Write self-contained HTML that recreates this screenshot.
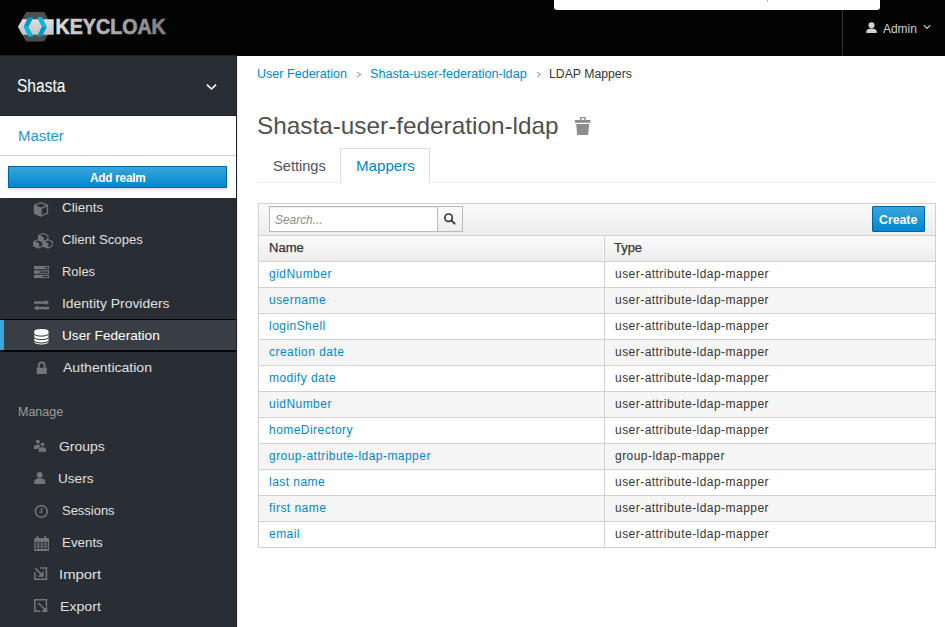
<!DOCTYPE html>
<html><head><meta charset="utf-8"><style>
*{box-sizing:border-box;margin:0;padding:0}
html,body{width:945px;height:627px;overflow:hidden;background:#fff;font-family:"Liberation Sans",sans-serif;color:#363636}
div,svg{position:absolute}
.t{white-space:nowrap;line-height:1;transform-origin:0 0}
</style></head><body>
<div style="left:0;top:0;width:945px;height:56px;background:#030303"></div>
<div style="left:0;top:55px;width:237px;height:1px;background:#1e1f21"></div>
<div style="left:554px;top:0;width:326px;height:10px;background:#fff;border-radius:0 0 3px 3px"></div>
<div style="left:767px;top:0;width:1px;height:2px;background:#bbb"></div>
<div style="left:842px;top:10px;width:1px;height:45px;background:#333"></div>
<svg style="left:0;top:0" width="200" height="55" viewBox="0 0 200 55">
<defs>
<linearGradient id="kg" x1="0" x2="1" y1="0" y2="0"><stop offset="0" stop-color="#d4d4d4"/><stop offset="1" stop-color="#8a8a8a"/></linearGradient>
<linearGradient id="bg1" x1="0" x2="0" y1="0" y2="1"><stop offset="0" stop-color="#e0e0e0"/><stop offset="1" stop-color="#c4c4c4"/></linearGradient>
</defs>
<polygon points="26,12 44.3,12 52,26.8 44.3,41.6 26,41.6 18,26.8" fill="#4d4d4d"/>
<polygon points="22.4,19.2 53.7,19.2 53.7,34.7 22.4,34.7 18,26.8" fill="url(#bg1)"/>
<polygon points="28.3,17 33.4,17 28.6,26.8 23.6,26.8" fill="#0096c8"/>
<polygon points="23.6,26.8 28.6,26.8 33.4,36.6 28.3,36.6" fill="#00b8e4"/>
<polygon points="37,17 42,17 46.9,26.8 41.8,26.8" fill="#00b8e4"/>
<polygon points="41.8,26.8 46.9,26.8 42,36.6 37,36.6" fill="#0096c8"/>
</svg>
<svg style="left:0;top:0" width="200" height="55" viewBox="0 0 200 55"><defs><linearGradient id="tg" gradientUnits="userSpaceOnUse" x1="55" x2="166" y1="0" y2="0"><stop offset="0" stop-color="#dcdcdc"/><stop offset="1" stop-color="#7e7e7e"/></linearGradient></defs><text x="55.6" y="34.3" textLength="110.2" lengthAdjust="spacingAndGlyphs" font-family="Liberation Sans" font-weight="bold" font-size="22.5" fill="url(#tg)" stroke="url(#tg)" stroke-width="0.7">KEYCLOAK</text></svg>
<svg style="left:866px;top:22px" width="11" height="11" viewBox="0 0 11 11"><circle cx="5.5" cy="3.2" r="3" fill="#d1d1d1"/><path d="M0.3 11 V9.6 C0.3 7.3 2.4 6.4 5.5 6.4 C8.6 6.4 10.7 7.3 10.7 9.6 V11Z" fill="#d1d1d1"/></svg>
<div class="t" id="admin" style="left:883.01px;top:22.59px;font-size:12px;color:#d1d1d1;font-weight:normal;font-style:normal;letter-spacing:0px;transform:scaleX(0.9949);">Admin</div>
<svg style="left:923px;top:24px" width="8" height="6" viewBox="0 0 8 6"><path d="M0.8 1.2 L4 4.4 L7.2 1.2" stroke="#d1d1d1" stroke-width="1.2" fill="none"/></svg>
<div style="left:0;top:56px;width:237px;height:571px;background:#292e34"></div>
<div style="left:236px;top:56px;width:1px;height:571px;background:#22262b"></div>
<div style="left:237px;top:56px;width:1px;height:571px;background:#ededed"></div>
<div class="t" id="shasta" style="left:17.08px;top:77.00px;font-size:18px;color:#fff;font-weight:normal;font-style:normal;letter-spacing:0px;transform:scaleX(0.8635);">Shasta</div>
<svg style="left:205px;top:82px" width="14" height="10" viewBox="0 0 14 10"><path d="M1.9 2.6 L6.5 7 L11.1 2.6" stroke="#fff" stroke-width="1.6" fill="none"/></svg>
<div style="left:0;top:115px;width:236px;height:1px;background:#202328"></div>
<div style="left:0;top:116px;width:236px;height:82px;background:#fff"></div>
<div class="t" id="master" style="left:17.76px;top:129.00px;font-size:14px;color:#2795d6;font-weight:normal;font-style:normal;letter-spacing:0px;transform:scaleX(1.0718);">Master</div>
<div style="left:0;top:155px;width:236px;height:1px;background:#d1d1d1"></div>
<div style="left:8px;top:166px;width:219px;height:22px;background:linear-gradient(#39a5dc,#0088ce);border:1px solid #00659c;border-radius:0;box-shadow:0 2px 3px rgba(3,3,3,.12)"></div>
<div class="t" id="addrealm" style="left:89.60px;top:172.05px;font-size:12px;color:#fff;font-weight:bold;font-style:normal;letter-spacing:-0.25px;transform:scaleX(0.9847);">Add realm</div>
<div style="left:0;top:319px;width:236px;height:33px;background:#393f44;border-top:1px solid #030303;border-bottom:2px solid #050505"></div>
<div style="left:0;top:320px;width:4px;height:30px;background:#39a5dc"></div>
<div class="t" id="n_clients" style="left:62.49px;top:200.80px;font-size:13.5px;color:#e0e0e0;font-weight:normal;font-style:normal;letter-spacing:0px;transform:scaleX(0.9983);">Clients</div>
<div class="t" id="n_scopes" style="left:62.24px;top:233.25px;font-size:13.5px;color:#e0e0e0;font-weight:normal;font-style:normal;letter-spacing:0px;transform:scaleX(0.9694);">Client Scopes</div>
<div class="t" id="n_roles" style="left:62.33px;top:264.55px;font-size:13.5px;color:#e0e0e0;font-weight:normal;font-style:normal;letter-spacing:0px;transform:scaleX(0.9567);">Roles</div>
<div class="t" id="n_idp" style="left:61.76px;top:296.80px;font-size:13.5px;color:#e0e0e0;font-weight:normal;font-style:normal;letter-spacing:0px;transform:scaleX(1.0307);">Identity Providers</div>
<div class="t" id="n_uf" style="left:62.08px;top:328.55px;font-size:13.5px;color:#fff;font-weight:normal;font-style:normal;letter-spacing:0px;transform:scaleX(1.0098);">User Federation</div>
<div class="t" id="n_auth" style="left:62.76px;top:360.80px;font-size:13.5px;color:#e0e0e0;font-weight:normal;font-style:normal;letter-spacing:0px;transform:scaleX(1.0401);">Authentication</div>
<div class="t" id="n_groups" style="left:59.29px;top:439.75px;font-size:13.5px;color:#e0e0e0;font-weight:normal;font-style:normal;letter-spacing:0px;transform:scaleX(1.0338);">Groups</div>
<div class="t" id="n_users" style="left:57.58px;top:471.79px;font-size:13.5px;color:#e0e0e0;font-weight:normal;font-style:normal;letter-spacing:0px;transform:scaleX(1.0076);">Users</div>
<div class="t" id="n_sessions" style="left:61.83px;top:504.00px;font-size:13.5px;color:#e0e0e0;font-weight:normal;font-style:normal;letter-spacing:0px;transform:scaleX(0.9603);">Sessions</div>
<div class="t" id="n_events" style="left:61.59px;top:535.50px;font-size:13.5px;color:#e0e0e0;font-weight:normal;font-style:normal;letter-spacing:0px;transform:scaleX(0.9875);">Events</div>
<div class="t" id="n_import" style="left:59.43px;top:567.89px;font-size:13.5px;color:#e0e0e0;font-weight:normal;font-style:normal;letter-spacing:0px;transform:scaleX(1.1011);">Import</div>
<div class="t" id="n_export" style="left:59.59px;top:599.80px;font-size:13.5px;color:#e0e0e0;font-weight:normal;font-style:normal;letter-spacing:0px;transform:scaleX(1.0463);">Export</div>
<div class="t" id="manage" style="left:17.68px;top:405.55px;font-size:12px;color:#9c9c9c;font-weight:normal;font-style:normal;letter-spacing:0px;transform:scaleX(1.0414);">Manage</div>
<svg style="left:0;top:190px" width="60" height="437" viewBox="0 190 60 437" fill="#72767b">
<!-- cube -->
<g stroke="#72767b" stroke-width="1.3" stroke-linejoin="round">
<polygon points="41,202.6 47.5,205.4 47.5,213.2 41,216 34.5,213.2 34.5,205.4" fill="none"/>
<polygon points="34.5,205.4 41,208.3 41,216 34.5,213.2" fill="#72767b"/>
<polyline points="41,208.3 47.5,205.4" fill="none"/>
</g>
<!-- cubes -->
<g stroke="#72767b" stroke-width="1.1" stroke-linejoin="round">
<polygon points="43.2,233.4 47.8,235.4 47.8,240 43.2,242 38.6,240 38.6,235.4" fill="none"/>
<polygon points="38.6,235.4 43.2,237.4 43.2,242 38.6,240" fill="#72767b"/>
<polygon points="38.6,239.4 43.2,241.4 43.2,246 38.6,248 34,246 34,241.4" fill="none"/>
<polygon points="34,241.4 38.6,243.4 38.6,248 34,246" fill="#72767b"/>
<polygon points="47.8,239.4 52.4,241.4 52.4,246 47.8,248 43.2,246 43.2,241.4" fill="none"/>
<polygon points="43.2,241.4 47.8,243.4 47.8,248 43.2,246" fill="#72767b"/>
</g>
<!-- roles -->
<rect x="34" y="266" width="15" height="3.3"/><rect x="34" y="270.4" width="15" height="3.4"/><rect x="34" y="274.9" width="15" height="3.2"/>
<rect x="44.7" y="267" width="3.3" height="1.3" fill="#292e34"/><rect x="39.5" y="271.5" width="8.5" height="1.3" fill="#292e34"/><rect x="42.5" y="276" width="5.5" height="1.2" fill="#292e34"/>
<!-- idp -->
<rect x="34" y="301.3" width="12" height="2.5"/><polygon points="45.5,299.8 49.2,302.55 45.5,305.3"/>
<rect x="37" y="306.8" width="12" height="2.5"/><polygon points="37.5,305.3 33.8,308.05 37.5,310.8"/>
<!-- lock -->
<path d="M38.8 368 V365.3 A2.9 2.9 0 0 1 44.6 365.3 V368" fill="none" stroke="#72767b" stroke-width="1.8"/>
<rect x="36.7" y="367.7" width="10.1" height="6.4" rx="0.6"/>
<!-- groups -->
<circle cx="37.8" cy="441.7" r="1.9"/><path d="M33.9 449 V447.3 C33.9 445.5 35.3 444.7 37.6 444.7 C39 444.7 39.8 445 40.3 445.5 L39 449Z"/>
<g stroke="#292e34" stroke-width="0.9"><circle cx="42.5" cy="444.3" r="2.2"/><path d="M38.1 452.2 V450.2 C38.1 447.9 39.8 446.8 42.3 446.8 C44.8 446.8 46.5 447.9 46.5 450.2 V452.2Z"/></g>
<!-- users -->
<circle cx="39.7" cy="474.9" r="2.9"/><path d="M34.1 484 V482 C34.1 479.6 36.3 478.2 39.7 478.2 C43.1 478.2 45.3 479.6 45.3 482 V484Z"/>
<!-- clock -->
<circle cx="41.3" cy="511.4" r="5.9" fill="none" stroke="#72767b" stroke-width="1.5"/>
<path d="M41.6 507.8 V512.2 H39.2" fill="none" stroke="#72767b" stroke-width="1.2"/>
<!-- calendar -->
<rect x="34.3" y="538" width="14.7" height="13" rx="0.5"/>
<rect x="36.5" y="536" width="2" height="3" rx="0.8"/><rect x="44.2" y="536" width="2" height="3" rx="0.8"/>
<g fill="#292e34">
<rect x="35.4" y="541.9" width="2.5" height="1.7"/><rect x="38.9" y="541.9" width="2.5" height="1.7"/><rect x="42.4" y="541.9" width="2.5" height="1.7"/><rect x="45.9" y="541.9" width="2.1" height="1.7"/>
<rect x="35.4" y="544.5" width="2.5" height="1.7"/><rect x="38.9" y="544.5" width="2.5" height="1.7"/><rect x="42.4" y="544.5" width="2.5" height="1.7"/><rect x="45.9" y="544.5" width="2.1" height="1.7"/>
<rect x="35.4" y="547.1" width="2.5" height="1.9"/><rect x="38.9" y="547.1" width="2.5" height="1.9"/><rect x="42.4" y="547.1" width="2.5" height="1.9"/><rect x="45.9" y="547.1" width="2.1" height="1.9"/>
</g>
<!-- import -->
<path d="M34.8 572.2 V579.3 H46.4 V568 H40" fill="none" stroke="#72767b" stroke-width="1.6"/>
<path d="M35.3 568.4 L42.3 575.4" stroke="#72767b" stroke-width="1.6"/>
<polygon points="43.7,570.8 43.7,576.8 37.7,576.8"/>
<!-- export -->
<path d="M40.2 611.3 H34.8 V599.8 H46.4 V606" fill="none" stroke="#72767b" stroke-width="1.6"/>
<path d="M38.4 603 L44.6 609.2" stroke="#72767b" stroke-width="1.6"/>
<polygon points="47.3,606 47.3,612.1 41.2,612.1"/>
</g>
</svg>
<svg style="left:30px;top:325px" width="24" height="24" viewBox="30 325 24 24">
<path d="M34.3 331.3 A7.1 2.4 0 0 1 48.5 331.3 V342.1 A7.1 2.3 0 0 1 34.3 342.1Z" fill="#fff"/>
<g fill="none" stroke="#25292e" stroke-width="1">
<path d="M34.3 333.9 A7.1 2.2 0 0 0 48.5 333.9"/>
<path d="M34.3 337.4 A7.1 2.2 0 0 0 48.5 337.4"/>
<path d="M34.3 340.8 A7.1 2.2 0 0 0 48.5 340.8"/>
</g>
</svg>
<div class="t" id="cr1" style="left:257.03px;top:68.00px;font-size:12.5px;color:#0088ce;font-weight:normal;font-style:normal;letter-spacing:0px;transform:scaleX(1.0044);">User Federation</div>
<svg style="left:355px;top:70px" width="8" height="9" viewBox="355 70 8 9"><path d="M357.1 72.1 L360.6 74.6 L357.1 77.1" fill="none" stroke="#9c9c9c" stroke-width="1.1"/></svg>
<div class="t" id="cr2" style="left:369.91px;top:67.80px;font-size:12.5px;color:#0088ce;font-weight:normal;font-style:normal;letter-spacing:0px;transform:scaleX(1.0114);">Shasta-user-federation-ldap</div>
<svg style="left:535px;top:70px" width="8" height="9" viewBox="535 70 8 9"><path d="M537.1 72.1 L540.2 74.6 L537.1 77.1" fill="none" stroke="#9c9c9c" stroke-width="1.1"/></svg>
<div class="t" id="cr3" style="left:549.03px;top:67.50px;font-size:12.5px;color:#363636;font-weight:normal;font-style:normal;letter-spacing:0px;transform:scaleX(0.9807);">LDAP Mappers</div>
<div class="t" id="title" style="left:256.68px;top:113.55px;font-size:24px;color:#505050;font-weight:normal;font-style:normal;letter-spacing:0px;transform:scaleX(1.0135);">Shasta-user-federation-ldap</div>
<svg style="left:570px;top:112px" width="26" height="26" viewBox="570 112 26 26" fill="#8b8d8f">
<path d="M580 116.9 H585.7 V120.1 H584.3 V118.2 H581.4 V120.1 H580Z"/>
<rect x="574.9" y="120" width="15.6" height="2.8"/>
<polygon points="576.2,123.9 589.2,123.9 588.1,134.9 577.1,134.9"/>
</svg>
<div style="left:258px;top:182px;width:678px;height:1px;background:#ededed"></div>
<div style="left:340px;top:148px;width:90px;height:35px;background:#fff;border:1px solid #ddd;border-bottom:0"></div>
<div class="t" id="tab1" style="left:272.83px;top:159.42px;font-size:14.5px;color:#4d5258;font-weight:normal;font-style:normal;letter-spacing:0px;transform:scaleX(1.0079);">Settings</div>
<div class="t" id="tab2" style="left:355.71px;top:158.80px;font-size:14.5px;color:#0088ce;font-weight:normal;font-style:normal;letter-spacing:0px;transform:scaleX(1.0439);">Mappers</div>
<div style="left:258px;top:203px;width:678px;height:345px;border:1px solid #d1d1d1;background:#fff"></div>
<div style="left:259px;top:204px;width:676px;height:32px;background:linear-gradient(#fafafa,#ededed);border-bottom:1px solid #d1d1d1"></div>
<div style="left:269px;top:206px;width:169px;height:26px;background:#fff;border:1px solid #bababa;box-shadow:inset 0 1px 1px rgba(3,3,3,.075)"></div>
<div class="t" id="search" style="left:275.22px;top:214.05px;font-size:12px;color:#8c8c8c;font-weight:normal;font-style:italic;letter-spacing:0px;transform:scaleX(0.9921);">Search...</div>
<div style="left:437px;top:206px;width:26px;height:26px;background:linear-gradient(#fafafa,#ededed);border:1px solid #bbb"></div>
<svg style="left:442px;top:211px" width="16" height="16" viewBox="442 211 16 16"><circle cx="448.6" cy="217.7" r="3.7" fill="none" stroke="#363636" stroke-width="1.7"/><path d="M451.2 220.3 L454.6 223.7" stroke="#363636" stroke-width="1.9" stroke-linecap="round"/></svg>
<div style="left:872px;top:206px;width:53px;height:26px;background:linear-gradient(#39a5dc,#0088ce);border:1px solid #00659c;border-radius:1px"></div>
<div class="t" id="create" style="left:879.27px;top:213.50px;font-size:12px;color:#fff;font-weight:bold;font-style:normal;letter-spacing:0px;transform:scaleX(1.0248);">Create</div>
<div style="left:259px;top:236px;width:676px;height:26px;background:linear-gradient(#fafafa,#ededed);border-bottom:1px solid #d1d1d1"></div>
<div style="left:603px;top:236px;width:1px;height:25px;background:#fff"></div>
<div class="t" id="th1" style="left:268.66px;top:242.39px;font-size:12px;color:#363636;font-weight:normal;font-style:normal;letter-spacing:0px;transform:scaleX(1.0851);-webkit-text-stroke:0.25px #363636;">Name</div>
<div class="t" id="th2" style="left:613.96px;top:241.55px;font-size:12px;color:#363636;font-weight:normal;font-style:normal;letter-spacing:0px;transform:scaleX(1.0760);-webkit-text-stroke:0.25px #363636;">Type</div>
<div style="left:259px;top:262px;width:676px;height:26px;background:#fff;border-bottom:1px solid #d1d1d1"></div>
<div style="left:259px;top:288px;width:676px;height:26px;background:#f5f5f5;border-bottom:1px solid #d1d1d1"></div>
<div style="left:259px;top:314px;width:676px;height:26px;background:#fff;border-bottom:1px solid #d1d1d1"></div>
<div style="left:259px;top:340px;width:676px;height:26px;background:#f5f5f5;border-bottom:1px solid #d1d1d1"></div>
<div style="left:259px;top:366px;width:676px;height:26px;background:#fff;border-bottom:1px solid #d1d1d1"></div>
<div style="left:259px;top:392px;width:676px;height:26px;background:#f5f5f5;border-bottom:1px solid #d1d1d1"></div>
<div style="left:259px;top:418px;width:676px;height:26px;background:#fff;border-bottom:1px solid #d1d1d1"></div>
<div style="left:259px;top:444px;width:676px;height:26px;background:#f5f5f5;border-bottom:1px solid #d1d1d1"></div>
<div style="left:259px;top:470px;width:676px;height:26px;background:#fff;border-bottom:1px solid #d1d1d1"></div>
<div style="left:259px;top:496px;width:676px;height:26px;background:#f5f5f5;border-bottom:1px solid #d1d1d1"></div>
<div style="left:259px;top:522px;width:676px;height:26px;background:#fff;border-bottom:1px solid #d1d1d1"></div>
<div class="t" style="left:269px;top:268px;font-size:12px;letter-spacing:0.46px;color:#0088ce">gidNumber</div>
<div class="t" style="left:615px;top:268px;font-size:12px;letter-spacing:0.46px;color:#363636">user-attribute-ldap-mapper</div>
<div class="t" style="left:269px;top:294px;font-size:12px;letter-spacing:0.46px;color:#0088ce">username</div>
<div class="t" style="left:615px;top:294px;font-size:12px;letter-spacing:0.46px;color:#363636">user-attribute-ldap-mapper</div>
<div class="t" style="left:269px;top:320px;font-size:12px;letter-spacing:0.46px;color:#0088ce">loginShell</div>
<div class="t" style="left:615px;top:320px;font-size:12px;letter-spacing:0.46px;color:#363636">user-attribute-ldap-mapper</div>
<div class="t" style="left:269px;top:346px;font-size:12px;letter-spacing:0.46px;color:#0088ce">creation date</div>
<div class="t" style="left:615px;top:346px;font-size:12px;letter-spacing:0.46px;color:#363636">user-attribute-ldap-mapper</div>
<div class="t" style="left:269px;top:372px;font-size:12px;letter-spacing:0.46px;color:#0088ce">modify date</div>
<div class="t" style="left:615px;top:372px;font-size:12px;letter-spacing:0.46px;color:#363636">user-attribute-ldap-mapper</div>
<div class="t" style="left:269px;top:398px;font-size:12px;letter-spacing:0.46px;color:#0088ce">uidNumber</div>
<div class="t" style="left:615px;top:398px;font-size:12px;letter-spacing:0.46px;color:#363636">user-attribute-ldap-mapper</div>
<div class="t" style="left:269px;top:424px;font-size:12px;letter-spacing:0.46px;color:#0088ce">homeDirectory</div>
<div class="t" style="left:615px;top:424px;font-size:12px;letter-spacing:0.46px;color:#363636">user-attribute-ldap-mapper</div>
<div class="t" style="left:269px;top:450px;font-size:12px;letter-spacing:0.46px;color:#0088ce">group-attribute-ldap-mapper</div>
<div class="t" style="left:615px;top:450px;font-size:12px;letter-spacing:0.46px;color:#363636">group-ldap-mapper</div>
<div class="t" style="left:269px;top:476px;font-size:12px;letter-spacing:0.46px;color:#0088ce">last name</div>
<div class="t" style="left:615px;top:476px;font-size:12px;letter-spacing:0.46px;color:#363636">user-attribute-ldap-mapper</div>
<div class="t" style="left:269px;top:502px;font-size:12px;letter-spacing:0.46px;color:#0088ce">first name</div>
<div class="t" style="left:615px;top:502px;font-size:12px;letter-spacing:0.46px;color:#363636">user-attribute-ldap-mapper</div>
<div class="t" style="left:269px;top:528px;font-size:12px;letter-spacing:0.46px;color:#0088ce">email</div>
<div class="t" style="left:615px;top:528px;font-size:12px;letter-spacing:0.46px;color:#363636">user-attribute-ldap-mapper</div>
<div style="left:604px;top:236px;width:1px;height:311px;background:#d1d1d1"></div>
</body></html>
